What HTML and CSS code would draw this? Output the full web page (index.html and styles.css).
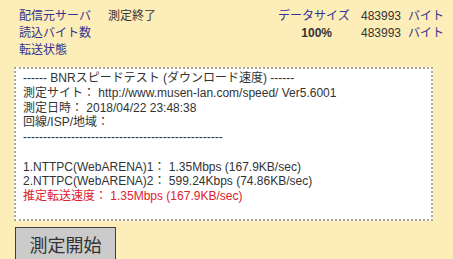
FILE: index.html
```html
<!DOCTYPE html>
<html lang="ja">
<head>
    <meta charset="UTF-8">
    <meta name="viewport" content="width=device-width, initial-scale=1.0">
    <title>BNRスピードテスト</title>
    <link rel="stylesheet" href="styles.css">
</head>
<body>
    <div class="status">
        <div class="status-left">
            <span class="label">配信元サーバ</span>
            <span class="value">測定終了</span>
            <span class="label">読込バイト数</span>
            <span class="value"></span>
            <span class="label">転送状態</span>
            <span class="value"></span>
        </div>
        <div class="status-right">
            <span class="label">データサイズ</span>
            <span class="value num">483993</span>
            <span class="label unit">バイト</span>
            <span class="value percent">100%</span>
            <span class="value num">483993</span>
            <span class="label unit">バイト</span>
        </div>
    </div>

    <div class="result">
        <div>------ BNRスピードテスト (ダウンロード速度) ------</div>
        <div>測定サイト： http://www.musen-lan.com/speed/ Ver5.6001</div>
        <div>測定日時： 2018/04/22 23:48:38</div>
        <div>回線/ISP/地域：</div>
        <div>--------------------------------------------------</div>
        <div>&nbsp;</div>
        <div>1.NTTPC(WebARENA)1： 1.35Mbps (167.9KB/sec)</div>
        <div>2.NTTPC(WebARENA)2： 599.24Kbps (74.86KB/sec)</div>
        <div class="result-total">推定転送速度： 1.35Mbps (167.9KB/sec)</div>
    </div>

    <button class="start-button">測定開始</button>
</body>
</html>
```

FILE: styles.css
```css
body {
    margin: 0;
    padding: 8px 8px 0 8px;
    background-color: #fdedb8;
    font-family: "Liberation Sans", "Noto Sans CJK JP", sans-serif;
    font-size: 12px;
    color: #333;
}
.status {
    display: flex;
    justify-content: space-between;
    align-items: flex-start;
}
.status-left {
    display: grid;
    grid-template-columns: 89px auto;
    padding-left: 11px;
    line-height: 17px;
}
.status-right {
    display: grid;
    grid-template-columns: 72px 50px 45px;
    line-height: 17px;
}
.status-right .num {
    padding-left: 11px;
}
.status-right .unit {
    padding-left: 8px;
}
.label {
    color: #33338f;
    white-space: nowrap;
}
.value {
    white-space: nowrap;
}
.percent {
    font-weight: bold;
    text-align: right;
    padding-right: 18px;
}
.result {
    width: 419px;
    box-sizing: border-box;
    margin: 8px 0 0 6px;
    padding: 2px 8px 15px 7px;
    background-color: #fff;
    border: 2px dotted #aca68e;
    line-height: 14.75px;
    white-space: nowrap;
}
.result-total {
    color: #e0202a;
}
.start-button {
    display: block;
    margin: 6px 0 0 7px;
    width: 101px;
    height: 34px;
    padding: 0;
    background-color: #cbcbcb;
    border: 1px solid #404040;
    border-radius: 0;
    font-family: "Liberation Sans", "Noto Sans CJK JP", sans-serif;
    font-size: 18px;
    color: #333;
}
```
